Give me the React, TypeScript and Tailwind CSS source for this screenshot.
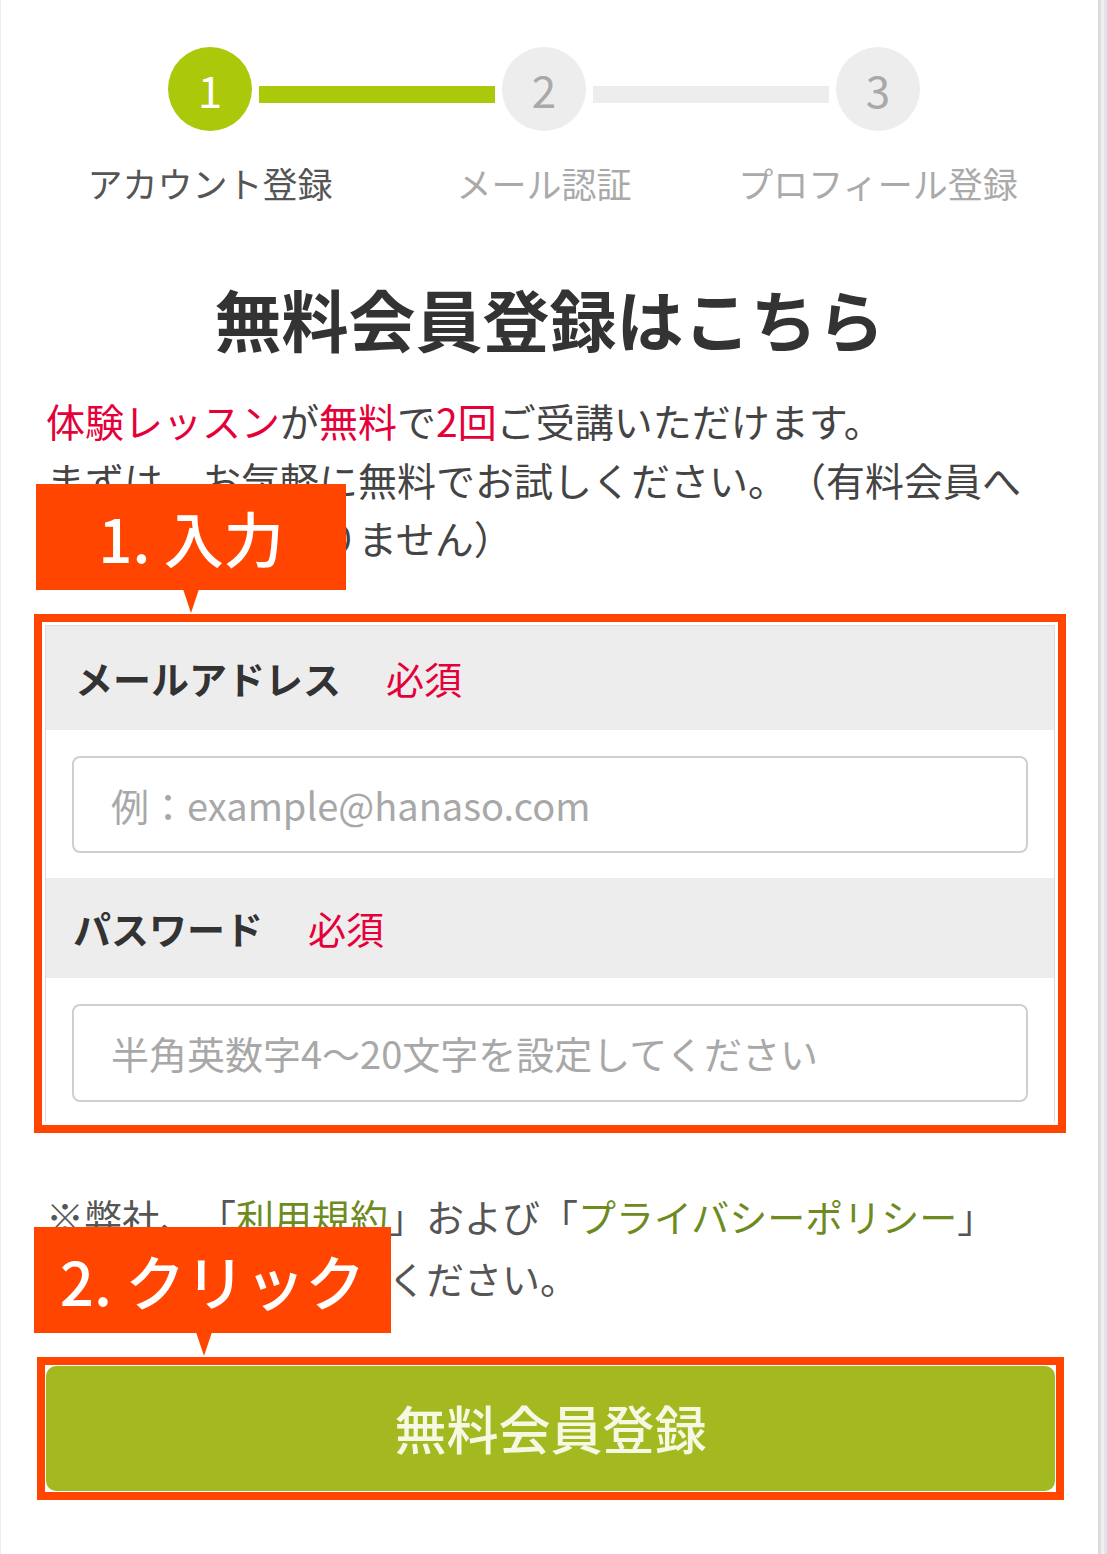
const STEPS = [
  { num: '1', label: 'アカウント登録', active: true },
  { num: '2', label: 'メール認証', active: false },
  { num: '3', label: 'プロフィール登録', active: false },
]

const jp = "font-['Noto_Sans_CJK_JP','Noto_Sans',sans-serif]"

function Callout({ text, className }: { text: string; className: string }) {
  return (
    <div className={`absolute ${className}`}>
      <div className="flex h-[106px] items-center justify-center bg-[#ff4500] text-[60px] font-medium leading-none text-white">
        {text}
      </div>
      <div className="absolute top-[105px] h-0 w-0 border-x-[8px] border-t-[24px] border-x-transparent border-t-[#ff4500]" style={{ left: 'var(--tip)' }} />
    </div>
  )
}

export default function App() {
  return (
    <div className={`flex min-h-[1554px] w-full bg-white ${jp} [text-spacing-trim:space-all]`}>
      <div className="w-[1098px] shrink-0 border-l border-[#efefef] pt-[47px]">
        {/* stepper */}
        <div className="flex items-center pl-[167px]">
          {STEPS.map((s, i) => (
            <div key={s.num} className="flex items-center">
              <div
                className={`flex h-[84px] w-[84px] items-center justify-center rounded-full text-[44px] leading-none ${
                  s.active ? 'bg-[#abc80b] text-white' : 'bg-[#ededed] text-[#a9a9a9]'
                }`}
              >
                {s.num}
              </div>
              {i < 2 && (
                <div className={`mx-[7px] mt-[10px] h-[17px] w-[236px] ${i === 0 ? 'bg-[#abc80b]' : 'bg-[#ededed]'}`} />
              )}
            </div>
          ))}
        </div>
        <div className="mt-[32px] ml-[42px] grid w-[1002px] grid-cols-3">
          {STEPS.map((s) => (
            <div key={s.num} className={`text-center text-[35px] leading-[40px] ${s.active ? 'text-[#555]' : 'text-[#aaa]'}`}>
              {s.label}
            </div>
          ))}
        </div>

        <h1 className="mt-[75px] text-center text-[67px] font-bold leading-[80px] text-[#333]">無料会員登録はこちら</h1>

        <div className="ml-[33px] w-[1032px]">
          <p className="mt-[33px] px-[12px] text-[39px] leading-[58.5px] text-[#444]">
            <span className="text-[#e60039]">体験レッスン</span>が<span className="text-[#e60039]">無料</span>で
            <span className="text-[#e60039]">2回</span>ご受講いただけます。
            <br />
            まずは、お気軽に無料でお試しください。（有料会員への自動移行はありません）
          </p>

          {/* form */}
          <div className="relative mt-[47px] border-[8px] border-[#ff4500] p-[3px]">
            <Callout text="1. 入力" className="-top-[138px] -left-[6px] w-[310px] [--tip:147px]" />
            <div className="border border-[#dcdcdc] border-b-0">
              <div className="flex h-[104px] items-center gap-[45px] bg-[#ededed] pl-[29px] text-[38px]">
                <span className="font-bold text-[#333]">メールアドレス</span>
                <span className="text-[#e60039]">必須</span>
              </div>
              <div className="bg-white px-[26px] pt-[26px] pb-[25px]">
                <div className="flex h-[97px] items-center rounded-[8px] border-2 border-[#cfcfcf] pl-[37px] text-[38px] text-[#a8a8a8]">
                  例：example@hanaso.com
                </div>
              </div>
              <div className="flex h-[100px] items-center gap-[45px] bg-[#ededed] pl-[27px] text-[38px]">
                <span className="font-bold text-[#333]">パスワード</span>
                <span className="text-[#e60039]">必須</span>
              </div>
              <div className="bg-white px-[26px] pt-[26px] pb-[20px]">
                <div className="flex h-[98px] items-center rounded-[8px] border-2 border-[#cfcfcf] pl-[37px] text-[38px] text-[#a8a8a8]">
                  半角英数字4〜20文字を設定してください
                </div>
              </div>
            </div>
          </div>

          <p className="mt-[52px] px-[12px] text-[38px] leading-[62px] text-[#555]">
            ※弊社、「<span className="text-[#6e8b1f]">利用規約</span>」および「<span className="text-[#6e8b1f]">プライバシーポリシー</span>」
            <br />
            に同意の上、ご登録ください。
          </p>

          {/* submit */}
          <div className="relative mt-[48px] ml-[3px] w-[1027px] border-[8px] border-[#ff4500] p-px">
            <Callout text="2. クリック" className="-top-[138px] -left-[11px] w-[357px] [--tip:162px]" />
            <button className="flex h-[125px] w-full items-center justify-center rounded-[10px] bg-[#a3b91f] text-[52px] font-medium text-[#f6f8e4]">
              無料会員登録
            </button>
          </div>
        </div>
      </div>
      <div className="w-[3px] shrink-0 bg-[#dcdcdc]" />
      <div className="w-[3px] shrink-0 bg-[#efefef]" />
      <div className="flex-1 bg-[#dfe5ee]" />
    </div>
  )
}
